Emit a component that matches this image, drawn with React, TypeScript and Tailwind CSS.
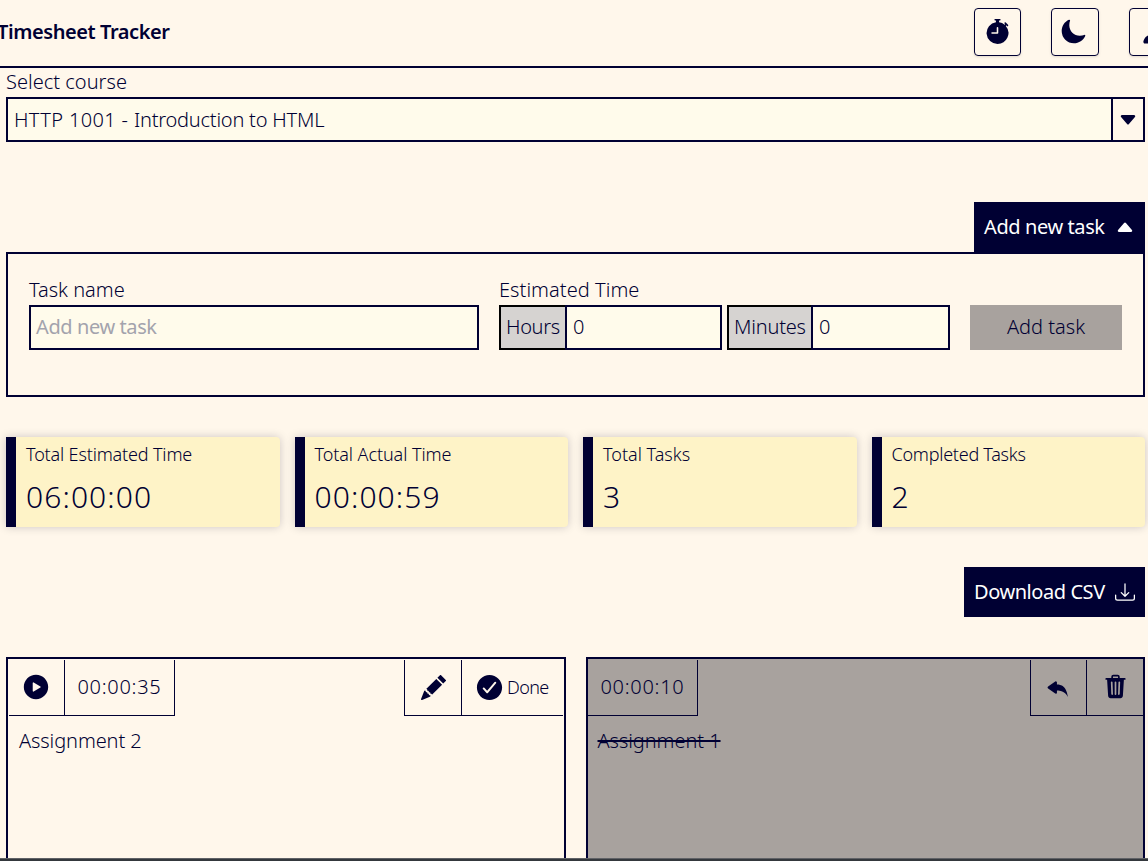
import type { ReactNode } from 'react';
import {
  BsCaretDownFill,
  BsCaretUpFill,
  BsDownload,
  BsPencilFill,
  BsReplyFill,
  BsStopwatchFill,
} from 'react-icons/bs';
import { IoCheckmarkCircle, IoMoon, IoPerson, IoPlayCircle, IoTrash } from 'react-icons/io5';

function HeaderButton({ label, className, children }: { label: string; className: string; children: ReactNode }) {
  return (
    <button
      aria-label={label}
      className={`flex h-12 shrink-0 items-center justify-center rounded border border-[#000033] shadow-sm ${className}`}
    >
      {children}
    </button>
  );
}

function StatCard({ label, value, labelClass = '', valueClass = '' }: { label: string; value: string; labelClass?: string; valueClass?: string }) {
  return (
    <div className="h-[90px] rounded-r-sm border-l-10 border-[#000033] bg-[#fef3c7] pl-2.5 shadow-[0_0_10px_rgba(0,0,40,0.2)]">
      <div className={`pt-[3px] text-[18px] leading-7 ${labelClass}`}>{label}</div>
      <div className={`mt-[9px] text-[30px] leading-10 ${valueClass}`}>{value}</div>
    </div>
  );
}

function NumberField({ label, className, labelClass }: { label: string; className: string; labelClass: string }) {
  return (
    <div className={`flex h-[45px] ${className}`}>
      <div className={`flex shrink-0 items-center border-2 border-r-0 border-black bg-[#d6d3d1] pb-px pl-[5px] ${labelClass}`}>{label}</div>
      <div className="flex flex-1 items-center border-2 border-[#000033] bg-[#fffbeb] pb-px pl-1.5">0</div>
    </div>
  );
}

export default function App() {
  return (
    <div className="flex h-[861px] w-[1148px] flex-col overflow-hidden bg-[#fff7eb] font-['Noto_Sans',sans-serif] text-[20px] leading-[30px] font-light text-[#000033]">
      <header className="flex h-[68px] shrink-0 items-center border-b-2 border-[#000033] pb-0.5">
        <h1 className="-ml-[3px] flex-1 text-[20px] font-semibold tracking-[-0.43px]">Timesheet Tracker</h1>
        <div className="-mr-[29px] flex gap-[30px]">
          <HeaderButton label="Timer" className="w-[47px] pb-px">
            <BsStopwatchFill size={25} />
          </HeaderButton>
          <HeaderButton label="Theme" className="w-12 pr-[3px] pb-0.5">
            <IoMoon size={27} />
          </HeaderButton>
          <HeaderButton label="Account" className="w-12">
            <IoPerson size={25} />
          </HeaderButton>
        </div>
      </header>

      <main className="flex min-h-0 flex-1 flex-col pr-[3px] pl-1.5">
        <label className="h-[29px] leading-[28px] tracking-[0.02px]">Select course</label>
        <div className="flex h-[45px] shrink-0 border-2 border-[#000033] bg-[#fffbeb]">
          <div className="flex-1 pl-1.5 leading-[41px] tracking-[-0.22px]">
            <span className="tracking-[0.36px]">HTTP 1001 - </span>Introduction to HTML
          </div>
          <div className="flex w-8 items-center justify-center border-l-2 border-[#000033] bg-[#fff7eb]">
            <BsCaretDownFill size={20} />
          </div>
        </div>

        <button className="mt-15 flex h-[50px] w-[171px] shrink-0 items-center justify-between self-end bg-[#000033] px-2.5 font-normal text-white">
          <span className="tracking-[-0.4px] whitespace-nowrap">Add new task</span>
          <BsCaretUpFill size={20} />
        </button>

        <section className="flex h-[145px] shrink-0 border-2 border-[#000033] pt-[21px] pl-[21px]">
          <div className="w-[450px]">
            <div className="h-[30px]">Task name</div>
            <div className="flex h-[45px] items-center border-2 border-[#000033] bg-[#fffbeb] pb-px pl-[5px] font-normal tracking-[-0.4px] text-[#a3a3ad]">
              Add new task
            </div>
          </div>
          <div className="ml-5 w-[451px]">
            <div className="h-[30px] tracking-[0.05px]">Estimated Time</div>
            <div className="flex gap-[5px]">
              <NumberField label="Hours" className="w-[223px]" labelClass="w-[66px] tracking-[-0.35px]" />
              <NumberField label="Minutes" className="w-[223px]" labelClass="w-[84px] tracking-[-0.2px]" />
            </div>
          </div>
          <button className="mt-[30px] ml-5 h-[45px] w-[152px] bg-[#a8a29e] pb-px">Add task</button>
        </section>

        <section className="mt-10 grid shrink-0 grid-cols-4 gap-[15px]">
          <StatCard label="Total Estimated Time" value="06:00:00" labelClass="tracking-[-0.16px]" valueClass="tracking-[1.1px]" />
          <StatCard label="Total Actual Time" value="00:00:59" labelClass="tracking-[-0.08px]" valueClass="tracking-[1.1px]" />
          <StatCard label="Total Tasks" value="3" />
          <StatCard label="Completed Tasks" value="2" labelClass="tracking-[-0.25px]" />
        </section>

        <button className="mt-10 flex h-[50px] w-[181px] shrink-0 items-center justify-between self-end bg-[#000033] px-2.5 font-normal text-white">
          <span className="tracking-[-0.44px] whitespace-nowrap">Download CSV</span>
          <BsDownload size={20} />
        </button>

        <section className="mt-10 grid min-h-0 flex-1 grid-cols-2 gap-5">
          <article className="border-2 border-b-0 border-[#000033] pt-px">
            <div className="flex h-14 justify-between px-px">
              <div className="flex border-r border-b border-[#000033]">
                <button aria-label="Start" className="flex w-14 items-center justify-center border-r border-[#000033] pr-px pb-px">
                  <IoPlayCircle size={30} />
                </button>
                <div className="flex w-[109px] items-center pb-0.5 pl-[12.5px] tracking-[0.7px]">00:00:35</div>
              </div>
              <div className="flex border-b border-l border-[#000033]">
                <button aria-label="Edit" className="flex w-14 items-center justify-center pb-px pl-0.5">
                  <BsPencilFill size={25} />
                </button>
                <button className="flex w-[102px] items-center border-l border-[#000033] pb-px pl-3 text-[18px]">
                  <IoCheckmarkCircle size={31} />
                  <span className="ml-[2.5px] tracking-[-0.6px]">Done</span>
                </button>
              </div>
            </div>
            <p className="pt-2.5 pl-[11px] tracking-[-0.1px]">Assignment 2</p>
          </article>

          <article className="border-2 border-b-0 border-[#000033] bg-[#a8a29e] pt-px">
            <div className="flex h-14 justify-between">
              <div className="flex w-[110px] items-center border-r border-b border-[#000033] pb-px pl-[13px] tracking-[0.7px]">00:00:10</div>
              <div className="flex border-b border-l border-[#000033]">
                <button aria-label="Restore" className="flex w-[55px] items-center justify-center">
                  <BsReplyFill size={25} />
                </button>
                <button aria-label="Delete" className="flex w-[57px] items-center justify-center border-l border-[#000033] pb-0.5 pl-px">
                  <IoTrash size={27} />
                </button>
              </div>
            </div>
            <p className="pt-2.5 pl-2.5 tracking-[-0.06px]">
              <s className="decoration-2">Assignment 1</s>
            </p>
          </article>
        </section>
      </main>
      <footer className="h-[3px] shrink-0 border-t border-[#606266] bg-[#34383d]" />
    </div>
  );
}
